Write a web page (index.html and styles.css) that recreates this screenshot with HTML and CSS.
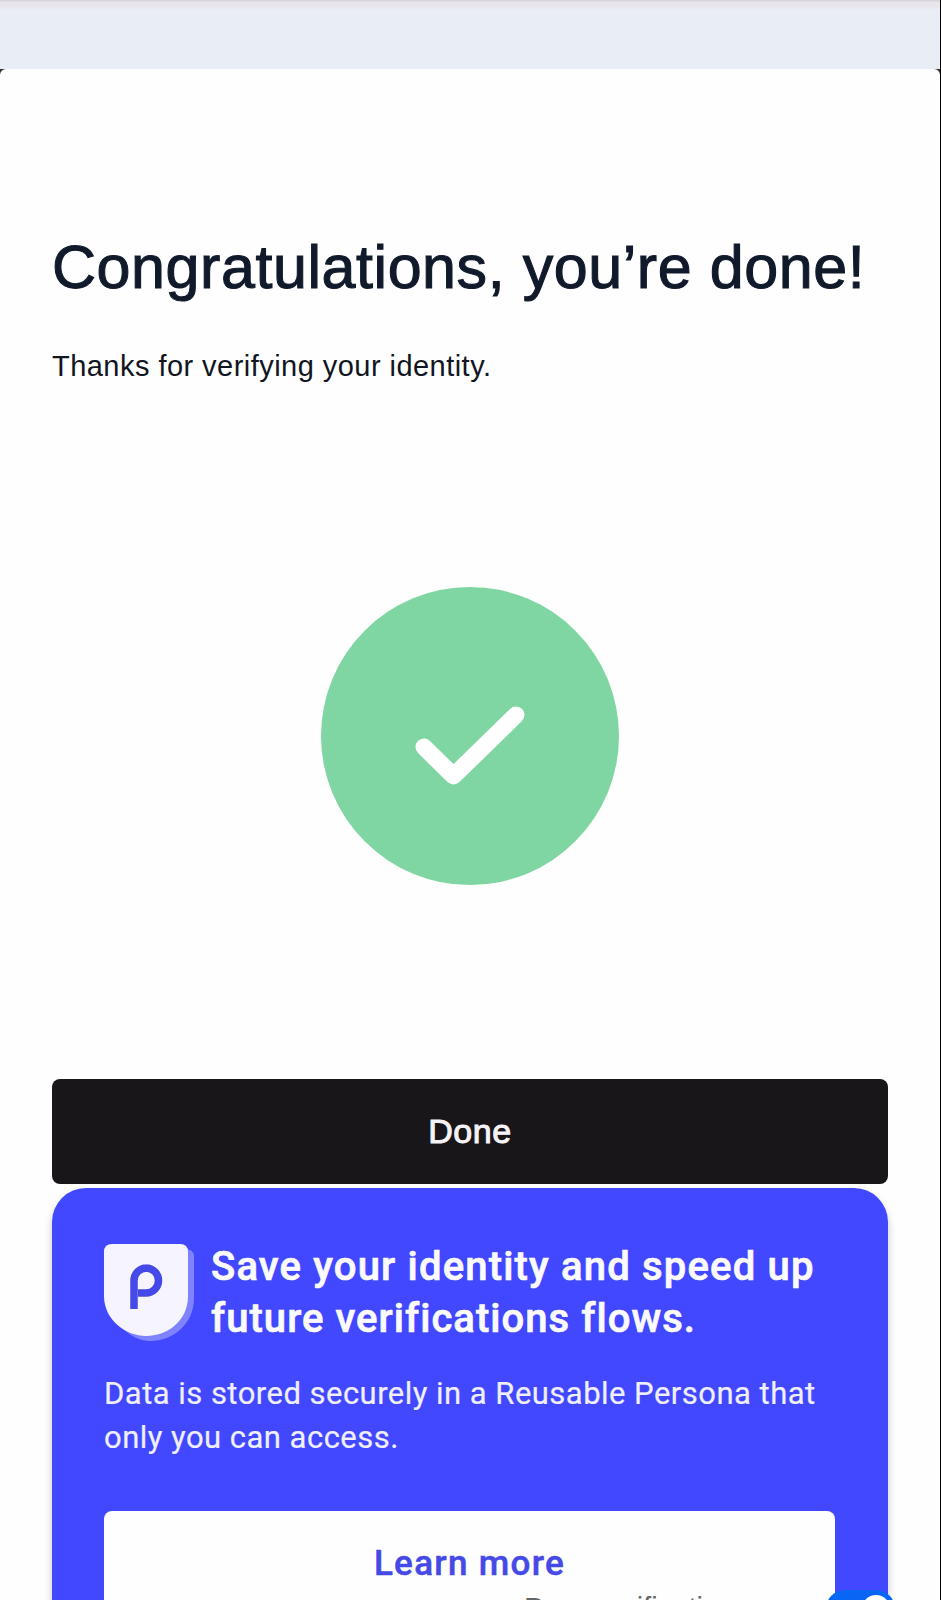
FILE: index.html
```html
<!DOCTYPE html>
<html lang="en">
<head>
<meta charset="utf-8">
<title>Verification complete</title>
<link rel="stylesheet" href="styles.css">
</head>
<body>
<div class="device">
  <div class="status-strip"></div>
  <main class="sheet">
    <h1 class="title">Congratulations, you’re done!</h1>
    <p class="subtitle">Thanks for verifying your identity.</p>
    <div class="success">
      <svg class="success-icon" viewBox="0 0 298 298">
        <circle cx="149" cy="149" r="149" fill="#80d6a3"/>
        <path d="M103 160L132.500 189L195 128" fill="none" stroke="#fff" stroke-width="17" stroke-linecap="round" stroke-linejoin="round"/>
      </svg>
    </div>
    <button class="done">Done</button>
    <section class="promo">
      <div class="promo-head">
        <svg class="shield" viewBox="0 0 90 98">
          <path d="M16 5H81Q90 5 90 13V54C90 80 69 97 46 97C28 97 7 80 7 54V13Z" fill="#8083ff"/>
          <path d="M8 0H76Q84 0 84 8V52C84 78 62 92 42 92C22 92 0 76 0 52V8Q0 0 8 0Z" fill="#f6f5ff"/>
          <path d="M30 65V36.500A12.500 12.500 0 0 1 42.500 24H42A12.500 12.500 0 0 1 42 49H34" fill="none" stroke="#4549e8" stroke-width="7.500"/>
        </svg>
        <h2 class="promo-title">Save your identity and speed up<br><span class="second-line">future verifications flows.</span></h2>
      </div>
      <p class="promo-text">Data is stored securely in a Reusable Persona that<br>only you can access.</p>
      <button class="learn">Learn more</button>
    </section>
  </main>
  <div class="pass-label">Pass verification</div>
  <div class="toggle"><div class="knob"></div></div>
</div>
</body>
</html>
```

FILE: styles.css
```css
* { box-sizing: border-box; }
body { margin: 0; background: #222; overflow: hidden; }
h1, h2, p { margin: 0; font-weight: 400; white-space: nowrap; }
button { display: block; border: 0; padding: 0; }
.device { position: relative; width: 941px; height: 1600px; overflow: hidden; border-right: 1px solid #000; background: #333; }
.status-strip { height: 69px; background: linear-gradient(#d8d5dc 0 1px, #e8e6ec 2px 7px, #e9edf6 10px); }
.sheet { height: 1531px; padding: 162px 52px 0; border-radius: 6px 6px 0 0; background: #fefefe; }
.title { height: 72px; font: 400 61px/72px "Liberation Sans", sans-serif; color: #111a2b; letter-spacing: .560px; -webkit-text-stroke: 1.100px #111a2b; }
.subtitle { height: 40px; margin-top: 43px; font: 400 29px/40px "Liberation Sans", sans-serif; color: #111522; letter-spacing: .460px; }
.success { height: 298px; margin: 201px 0 194px; display: flex; justify-content: center; }
.success-icon { width: 298px; height: 298px; }
.done { width: 836px; height: 105px; border-radius: 8px; background: #19161a; color: #f5f3f7; font: 400 34px/103px "Liberation Sans", sans-serif; letter-spacing: .6px; -webkit-text-stroke: 1px #f5f3f7; }
.promo { width: 836px; height: 460px; margin-top: 4px; padding: 56px 52px 0; border-radius: 34px 34px 0 0; background: #4248ff; box-shadow: 0 6px 8px rgba(0,0,0,.22); }
.promo-head { display: flex; height: 98px; gap: 17px; }
.shield { width: 90px; height: 98px; flex: none; }
.promo-title { margin-top: -3px; font: 500 40px/52px Roboto, sans-serif; color: #fbfaff; letter-spacing: 1.180px; -webkit-text-stroke: .7px #fbfaff; }
.second-line { letter-spacing: 1.050px; }
.promo-text { margin-top: 30px; font: 400 31px/44px Roboto, sans-serif; color: #f0effe; letter-spacing: .470px; -webkit-text-stroke: .2px #f0effe; }
.learn { width: 731px; height: 105px; margin-top: 51px; border-radius: 8px; background: #fefefe; color: #4549e5; font: 500 35px/102px Roboto, sans-serif; letter-spacing: 1.300px; -webkit-text-stroke: .5px #4549e5; }
.pass-label { position: absolute; left: 524px; top: 1590px; font: 400 29px/36px "Liberation Sans", sans-serif; color: #666; white-space: nowrap; }
.toggle { position: absolute; left: 826px; top: 1590px; width: 69px; height: 38px; padding: 5px; border-radius: 19px; background: #0866f5; display: flex; justify-content: flex-end; }
.knob { width: 28px; height: 28px; border-radius: 50%; background: #fff; }
```
